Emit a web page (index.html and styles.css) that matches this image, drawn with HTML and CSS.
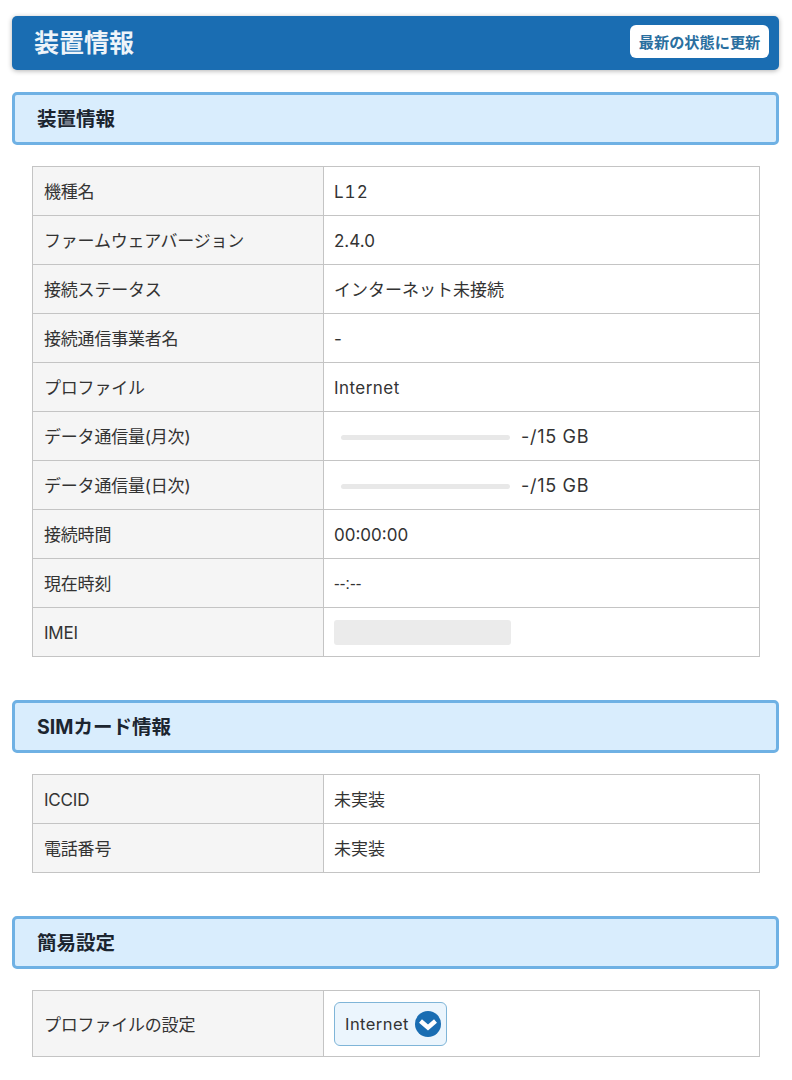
FILE: index.html
```html
<!DOCTYPE html>
<html lang="ja">

<head>
    <meta charset="UTF-8">
    <meta name="viewport" content="width=device-width, initial-scale=1.0">
    <title>装置情報</title>
    <link rel="stylesheet" href="styles.css">
</head>

<body>

    <div class="page-header">
        <h1 class="page-title">装置情報</h1>
        <button class="refresh-btn">最新の状態に更新</button>
    </div>

    <h2 class="section-title">装置情報</h2>
    <table class="info-table">
        <tr><th>機種名</th><td class="latin model-name">L12</td></tr>
        <tr><th>ファームウェアバージョン</th><td>2.4.0</td></tr>
        <tr><th>接続ステータス</th><td>インターネット未接続</td></tr>
        <tr><th>接続通信事業者名</th><td>-</td></tr>
        <tr><th>プロファイル</th><td class="latin">Internet</td></tr>
        <tr>
            <th>データ通信量(月次)</th>
            <td><div class="usage"><div class="usage-bar"></div><span class="latin">-/15 GB</span></div></td>
        </tr>
        <tr>
            <th>データ通信量(日次)</th>
            <td><div class="usage"><div class="usage-bar"></div><span class="latin">-/15 GB</span></div></td>
        </tr>
        <tr><th>接続時間</th><td>00:00:00</td></tr>
        <tr><th>現在時刻</th><td class="no-time">--:--</td></tr>
        <tr><th>IMEI</th><td><div class="masked"></div></td></tr>
    </table>

    <h2 class="section-title">SIMカード情報</h2>
    <table class="info-table">
        <tr><th>ICCID</th><td>未実装</td></tr>
        <tr><th>電話番号</th><td>未実装</td></tr>
    </table>

    <h2 class="section-title">簡易設定</h2>
    <table class="info-table">
        <tr class="select-row">
            <th>プロファイルの設定</th>
            <td>
                <div class="select-box">
                    <span class="latin">Internet</span>
                    <svg class="select-icon" viewBox="0 0 26 26" width="26" height="26">
                        <circle cx="13" cy="13" r="13" fill="#1a6db2"/>
                        <path d="M5.5 10 L13 16.5 L20.5 10" fill="none" stroke="#fff" stroke-width="4.5"/>
                    </svg>
                </div>
            </td>
        </tr>
    </table>

</body>

</html>
```

FILE: styles.css
```css
* {
    margin: 0;
    padding: 0;
    box-sizing: border-box;
}

body {
    font-family: Inter, "Noto Sans CJK JP", sans-serif;
    background-color: #fff;
    color: #333;
    padding: 16px 13px 0 12px;
    height: 1080px;
    overflow: hidden;
}

.page-header {
    background-color: #1a6db2;
    border-radius: 5px;
    box-shadow: 0 1px 5px rgba(0, 0, 0, 0.3);
    height: 54px;
    display: flex;
    justify-content: space-between;
    align-items: center;
    padding: 0 10px 0 22px;
}

.page-title {
    font-size: 25px;
    font-weight: bold;
    color: #eef4f9;
    padding-bottom: 4px;
}

.refresh-btn {
    font-family: inherit;
    font-size: 15.2px;
    font-weight: bold;
    color: #2a6f9f;
    background-color: #fff;
    border: none;
    border-radius: 6px;
    width: 139px;
    height: 33px;
    margin-bottom: 4px;
}

.section-title {
    font-size: 19.5px;
    font-weight: bold;
    color: #1c2530;
    background-color: #d9edfd;
    border: 3px solid #6fb1e4;
    border-radius: 5px;
    height: 53px;
    display: flex;
    align-items: center;
    padding: 0 0 2px 22px;
    margin-top: 22px;
}

.info-table {
    border-collapse: collapse;
    table-layout: fixed;
    width: 728px;
    margin: 21px 0 43px 20px;
    font-size: 17px;
    line-height: 24px;
}

.info-table tr {
    height: 49px;
}

.info-table th,
.info-table td {
    border: 1px solid #c4c4c4;
    padding: 2px 10px 0;
    text-align: left;
    font-weight: normal;
}

.info-table th {
    width: 291px;
    padding-left: 11px;
    letter-spacing: -0.2px;
    background-color: #f5f5f5;
}

.section-title + .info-table + .section-title {
    margin-top: 0;
}

.latin {
    letter-spacing: 0.45px;
    word-spacing: 2px;
}

.info-table .model-name {
    letter-spacing: 1px;
    font-variant-numeric: tabular-nums;
}

.no-time {
    font-family: "Liberation Sans", sans-serif;
}

.usage {
    display: flex;
    align-items: center;
    gap: 11px;
    padding-left: 7px;
}

.usage .latin {
    font-size: 18px;
    letter-spacing: 0.7px;
    word-spacing: 0;
}

.usage-bar {
    width: 169px;
    height: 5px;
    border-radius: 3px;
    background-color: #e8e8e8;
}

.masked {
    width: 177px;
    height: 25px;
    margin-top: -2px;
    border-radius: 3px;
    background-color: #ebebeb;
}

.select-row {
    height: 66px !important;
}

.select-box {
    display: flex;
    align-items: center;
    gap: 6px;
    width: 113px;
    height: 44px;
    margin-top: -2px;
    padding-left: 10px;
    font-size: 16.5px;
    background-color: #ebf5fd;
    border: 1px solid #7fb5d8;
    border-radius: 6px;
}

.select-icon {
    flex-shrink: 0;
}
```
